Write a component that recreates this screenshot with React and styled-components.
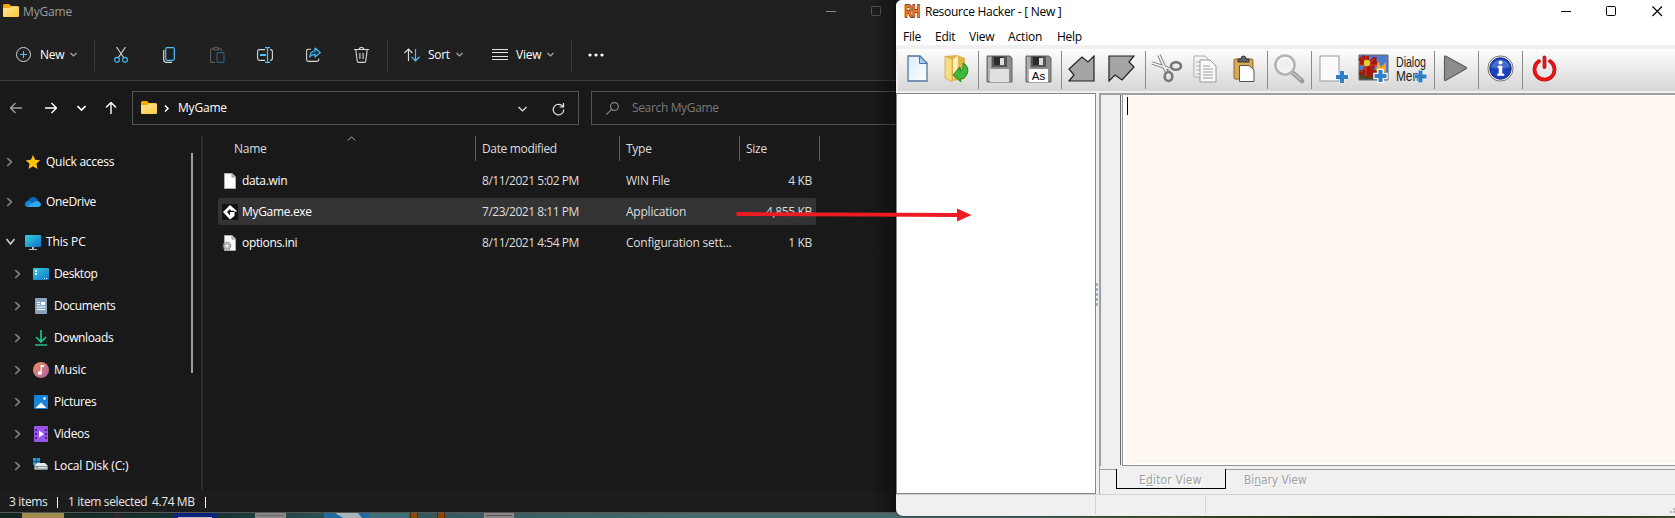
import React from "react";
import styled, { createGlobalStyle, css } from "styled-components";

const Global = createGlobalStyle`
  * { box-sizing: border-box; }
  html, body { margin: 0; padding: 0; overflow: hidden; }
  body { font-family: "Open Sans", "Noto Sans", sans-serif; font-size: 12px; background: #14231f; }
  svg { display: block; flex: none; }
`;

const Desktop = styled.div`
  position: relative;
  width: 1675px;
  height: 518px;
  overflow: hidden;
  background: #14231f;
`;
const Wallpaper = styled.svg`
  position: absolute;
  left: 0;
  top: 508px;
`;
const DragArrow = styled.svg`
  position: absolute;
  left: 730px;
  top: 204px;
`;

const Text = styled.span`
  color: ${(p) => p.$color || "#fff"};
  font-size: ${(p) => p.$size || 12}px;
  font-weight: ${(p) => p.$weight || 400};
  letter-spacing: ${(p) => (p.$ls ?? -0.25)}px;
  margin-left: ${(p) => p.$ml || 0}px;
  line-height: 16px;
  white-space: pre;
  flex: none;
  ${(p) => p.$w && css`width: ${p.$w}px;`}
`;
const Slot = styled.span`
  display: flex;
  align-items: center;
  flex: none;
  width: ${(p) => p.$w}px;
  margin-left: ${(p) => p.$ml || 0}px;
  margin-top: ${(p) => p.$mt || 0}px;
`;

/* ---------- file explorer ---------- */
const Explorer = styled.section`
  position: absolute;
  left: 0;
  top: 0;
  width: 896px;
  height: 513px;
  display: flex;
  flex-direction: column;
  background: #191919;
  border-bottom: 1px solid #555;
  overflow: hidden;
`;
const EdgeShade = styled.div`
  position: absolute;
  right: 0;
  top: 0;
  width: 26px;
  height: 513px;
  background: linear-gradient(90deg, rgba(0, 0, 0, 0), rgba(0, 0, 0, 0.35));
`;
const DarkTitle = styled.header`
  height: 24px;
  display: flex;
  align-items: center;
  padding-left: 3px;
  background: #202020;
  flex: none;
`;
const CommandBar = styled.div`
  height: 57px;
  display: flex;
  align-items: center;
  padding: 5px 0 0 16px;
  background: #202020;
  border-bottom: 1px solid #3e3e3e;
  flex: none;
`;
const CommandRule = styled.i`
  width: 1px;
  height: 32px;
  background: #3a3a3a;
  flex: none;
  margin-left: ${(p) => p.$ml}px;
`;
const AddressRow = styled.div`
  height: 55px;
  display: flex;
  align-items: center;
  padding: 0 0 1px 10px;
  flex: none;
`;
const Field = styled.div`
  width: ${(p) => p.$w}px;
  height: 34px;
  margin-left: ${(p) => p.$ml}px;
  border: 1px solid #535353;
  display: flex;
  align-items: center;
  flex: none;
`;
const Panes = styled.div`
  height: 354px;
  display: flex;
  flex: none;
`;
const NavPane = styled.nav`
  width: 191px;
  padding-top: 6px;
  flex: none;
`;
const NavItem = styled.div`
  height: ${(p) => (p.$nested ? 32 : 40)}px;
  padding-left: ${(p) => (p.$nested ? 13 : 5)}px;
  display: flex;
  align-items: center;
`;
const NavChildren = styled.div`
  margin-top: -4px;
`;
const ScrollThumb = styled.div`
  width: 2px;
  height: 220px;
  margin-top: 17px;
  background: #9f9f9f;
  flex: none;
`;
const Splitter = styled.div`
  width: 2px;
  margin-left: 8px;
  background: #2b2b2b;
  flex: none;
`;
const FileList = styled.div`
  padding-left: 15px;
  flex: 1;
`;
const Columns = styled.div`
  display: flex;
  height: 25px;
  margin-bottom: 6px;
`;
const Column = styled.div`
  width: ${(p) => p.$w}px;
  padding-left: ${(p) => p.$pad}px;
  border-right: 1px solid #5c5c5c;
  display: flex;
  align-items: center;
  flex: none;
`;
const SortCaret = styled.svg`
  align-self: flex-start;
  margin-left: 80px;
`;
const FileRow = styled.div`
  width: 598px;
  height: 27px;
  margin-bottom: 4px;
  padding: 0 4px 0 4px;
  display: flex;
  align-items: center;
  border-radius: 2px;
  background: ${(p) => (p.$selected ? "#333333" : "transparent")};
`;
const Cell = styled.div`
  width: ${(p) => p.$w}px;
  color: #dedede;
  letter-spacing: ${(p) => (p.$ls ?? -0.25)}px;
  white-space: pre;
  text-align: ${(p) => (p.$right ? "right" : "left")};
  flex: none;
`;
const DarkStatus = styled.footer`
  height: 22px;
  display: flex;
  align-items: center;
  padding: 2px 0 0 9px;
  background: #1c1c1c;
`;
const StatusRule = styled.i`
  width: 1px;
  height: 11px;
  margin-left: ${(p) => p.$ml}px;
  background: #fff;
`;

/* ---------- resource hacker ---------- */
const Hacker = styled.section`
  position: absolute;
  left: 896px;
  top: 0;
  width: 779px;
  height: 516px;
  display: flex;
  flex-direction: column;
  background: #f0f0f0;
  border-radius: 6px 0 0 7px;
  overflow: hidden;
  box-shadow: 0 0 2px #000;
`;
const LightTitle = styled.header`
  height: 24px;
  display: flex;
  align-items: center;
  padding-left: 8px;
  background: #fff;
  flex: none;
`;
const MenuBar = styled.div`
  height: 21px;
  padding: 4px 0 0 7px;
  display: flex;
  align-items: center;
  background: #fff;
  flex: none;
`;
const ToolStrip = styled.div`
  height: 42px;
  margin: 4px 0 2px 2px;
  padding-left: 7px;
  display: flex;
  align-items: center;
  background: linear-gradient(#fdfdfd, #d6d6d6);
  flex: none;
`;
const ToolRule = styled.i`
  width: 1px;
  height: 38px;
  margin-left: ${(p) => p.$ml}px;
  background: #8a8a8a;
  flex: none;
`;
const Workspace = styled.div`
  height: 401px;
  display: flex;
  flex: none;
`;
const Tree = styled.div`
  width: 200px;
  border: 1px solid #828790;
  background: #fff;
  flex: none;
`;
const Grip = styled.div`
  width: 3px;
  display: flex;
  flex-direction: column;
  justify-content: center;
  gap: 2px;
  padding-top: 2px;
  flex: none;
`;
const GripDot = styled.i`
  height: 3px;
  width: 2px;
  background: #99b4d1;
`;
const RightPane = styled.div`
  width: 680px;
  display: flex;
  flex-direction: column;
  border-left: 1px solid #9f9f9f;
  flex: none;
`;
const EditorFrame = styled.div`
  height: 373px;
  display: flex;
  border-top: 2px solid #9f9f9f;
  border-left: 1px solid #9f9f9f;
  flex: none;
`;
const Gutter = styled.div`
  width: 20px;
  height: 370px;
  border-right: 1px solid #696969;
`;
const Editor = styled.div`
  flex: 1;
  height: 371px;
  margin-left: 1px;
  border: solid #8f9496;
  border-width: 0 0 1px 1px;
  background: #fff8f2;
  box-shadow: inset 2px -2px #fff, inset 0 1px #fff;
  padding: 2px 0 0 4px;
`;
const Caret = styled.i`
  display: block;
  width: 1px;
  height: 18px;
  background: #000;
`;
const Tabs = styled.div`
  display: flex;
  height: 24px;
  margin-top: 3px;
`;
const TabEdge = styled.div`
  width: ${(p) => p.$w || 15}px;
  border-top: 1px solid #9f9f9f;
`;
const Tab = styled.div`
  height: 20px;
  width: ${(p) => (p.$active ? 110 : 448)}px;
  padding: 3px 0 0 ${(p) => (p.$active ? 22 : 18)}px;
  border: solid #000;
  border-width: ${(p) => (p.$active ? "0 1px 1px 1px" : "0")};
  ${(p) => !p.$active && css`flex: 1; border-top: 1px solid #9f9f9f; padding-top: 2px;`}
  font: 12px/17px "DejaVu Sans Condensed", "DejaVu Sans", sans-serif;
  font-stretch: condensed;
  letter-spacing: ${(p) => (p.$active ? 0.15 : -0.1)}px;
  color: #a0a0a0;
  text-shadow: 1px 1px #fff;
  white-space: pre;
`;
const LightStatus = styled.footer`
  flex: 1;
  border-top: 1px solid #d2d2d2;
  display: flex;
  padding: 1px 0 2px;
`;
const StatusCell = styled.div`
  width: ${(p) => p.$w}px;
  border-right: 1px solid #d2d2d2;
`;
const SizeGrip = styled.svg`
  margin: 12px 0 0 auto;
`;
const DialogGlyph = styled.svg`
  overflow: visible;
`;

/* ---------- icons ---------- */
const Chevron = ({ w = 7, h = 4, color = "#a8a8a8", sw = 1.2 }) => (
  <svg width={w} height={h + 2} viewBox={`0 0 ${w} ${h + 2}`} fill="none" stroke={color} strokeWidth={sw}>
    <path d={`M.5 1L${w / 2} ${h}L${w - 0.5} 1`} />
  </svg>
);
const SideChevron = ({ color = "#808080" }) => (
  <svg width="7" height="10" fill="none" stroke={color} strokeWidth="1.7"><path d="M1.2 1L5.4 5L1.2 9" /></svg>
);
const Folder = () => (
  <svg width="16" height="13">
    <defs><linearGradient id="fold" x2="1" y2="1"><stop stopColor="#ffe69a" /><stop offset="1" stopColor="#ffc83a" /></linearGradient></defs>
    <path d="M0 1.5Q0 0 1.5 0H6L8 2H14.5Q16 2 16 3.5V7H0Z" fill="#f2a900" />
    <path d="M0 5Q0 4 1 4H6L8 2.5H15Q16 2.5 16 3.5V12Q16 13 15 13H1Q0 13 0 12Z" fill="url(#fold)" />
  </svg>
);
const NavArrow = ({ dir, color = "#fff" }) => (
  <svg width="12" height="12" fill="none" stroke={color} strokeWidth="1.4">
    <g transform={`rotate(${dir} 6 6)`}><path d="M0 6H11.5M6.5 1L11.5 6L6.5 11" /></g>
  </svg>
);
const PlusCircle = () => (
  <svg width="15" height="15" fill="none" stroke="#d8d8d8"><circle cx="7.5" cy="7.5" r="7" /><path d="M7.5 4V11M4 7.5H11" stroke="#4cc2ff" strokeWidth="1.1" /></svg>
);
const Scissors = () => (
  <svg width="14" height="16" fill="none" stroke="#d8d8d8" strokeWidth="1.1">
    <path d="M2.5 0L9.6 10.5M11.5 0L4.4 10.5" /><g stroke="#4cc2ff"><circle cx="3" cy="12.8" r="2.4" /><circle cx="11" cy="12.8" r="2.4" /></g>
  </svg>
);
const Copy = () => (
  <svg width="12" height="16" fill="none" stroke="#d8d8d8" strokeWidth="1.2"><path d="M.7 3V12.5Q.7 15.3 3.5 15.3H9" /><rect x="2.7" y=".7" width="8.6" height="12.6" rx="1.5" stroke="#4cc2ff" /></svg>
);
const Paste = () => (
  <svg width="15" height="16" fill="none" stroke="#5e5e5e" strokeWidth="1.1"><path d="M5 15.4H1.8Q.6 15.4 .6 14V3Q.6 1.8 1.8 1.8H3.5M9 1.8H10.5Q11.6 1.8 11.6 4M3.6 .8H8.6V2.8H3.6Z" /><rect x="7" y="5.6" width="7" height="9.8" rx="1" stroke="#2e5f7b" /></svg>
);
const Rename = () => (
  <svg width="16" height="16" fill="none" stroke="#d8d8d8" strokeWidth="1.1"><path d="M8 2.6H2.5Q.6 2.6 .6 4.5V11.5Q.6 13.4 2.5 13.4H8M13 2.6Q15.4 2.6 15.4 4.5V11.5Q15.4 13.4 13 13.4" /><path d="M8 .6H13M8 15.4H13M10.5 .6V15.4" stroke="#4cc2ff" strokeWidth="1.2" /><path d="M3 8H9" stroke="#4cc2ff" strokeWidth="2" /></svg>
);
const Share = () => (
  <svg width="15" height="15" fill="none" stroke="#d8d8d8" strokeWidth="1.1"><path d="M5 2.2H2.3Q.6 2.2 .6 4V12.6Q.6 14.4 2.3 14.4H11Q12.8 14.4 12.8 12.6V11.5" /><path d="M9 1L14.4 5.6L9 10.2V7.6Q5.5 7.4 3.6 10Q4 4.4 9 3.8Z" stroke="#4cc2ff" fill="#16425a" strokeLinejoin="round" /></svg>
);
const Trash = () => (
  <svg width="15" height="16" fill="none" stroke="#d8d8d8" strokeWidth="1.1"><path d="M0 2.5H15M5 2.5Q5.2 .5 7.5 .5T10 2.5M1.8 2.5L3.2 14Q3.4 15.4 4.6 15.4H10.4Q11.6 15.4 11.8 14L13.2 2.5M5.9 6V12M9.1 6V12" /></svg>
);
const SortIcon = () => (
  <svg width="16" height="14" fill="none" stroke="#d8d8d8" strokeWidth="1.2"><path d="M4.5 13V1M.4 5L4.5 1L8.4 5" /><path d="M11.5 1V12.8M7.6 8.8L11.5 12.8L15.6 8.8" stroke="#4cc2ff" /></svg>
);
const ViewIcon = () => (
  <svg width="16" height="11" stroke="#e4e4e4"><path d="M0 .5H16M0 3.5H16M0 7.5H16M0 10.5H16" /></svg>
);
const Dots = () => <svg width="16" height="4" fill="#fff"><circle cx="2" cy="2" r="1.6" /><circle cx="8" cy="2" r="1.6" /><circle cx="14" cy="2" r="1.6" /></svg>;
const Refresh = () => (
  <svg width="13" height="13" fill="none" stroke="#e4e4e4" strokeWidth="1.2"><path d="M11.8 6.5A5.3 5.3 0 1 1 9.6 2.3L11.4 3.8M11.5 0V4H7.6" /></svg>
);
const Lens = () => <svg width="13" height="13" fill="none" stroke="#8a8a8a" strokeWidth="1.1"><circle cx="8.4" cy="4.5" r="3.9" /><path d="M5.6 7.3L.4 12.6" /></svg>;

const navIcons = {
  star: <svg width="16" height="16"><path d="M8 1L10.1 5.8L15.2 6.3L11.4 9.8L12.5 15L8 12.2L3.5 15L4.6 9.8L.8 6.3L5.9 5.8Z" fill="#ffc40d" /></svg>,
  cloud: <svg width="16" height="16"><path d="M3 8Q4 3 8 3Q12 3 13 7L8 11Z" fill="#0a64b8" /><path d="M0 10.5Q0 7 4 6.6L12 13H3.5Q0 13 0 10.5Z" fill="#1487dc" /><path d="M2 12.5L9 8Q12 6 14.4 8Q16 9 16 10.5Q15.6 13 13 13H3.5Z" fill="#2fa9f2" /></svg>,
  pc: <svg width="16" height="16"><defs><linearGradient id="scr" x2="1" y2="1"><stop stopColor="#35d2df" /><stop offset="1" stopColor="#1170c8" /></linearGradient></defs><rect y="1" width="16" height="12" rx="1" fill="url(#scr)" /><path d="M7 13H9V15H12V16H4V15H7Z" fill="#b8c0c6" /></svg>,
  desktop: <svg width="16" height="16"><rect y="2" width="16" height="12" rx="1" fill="url(#scr)" /><path d="M2 4H4V6H2ZM2 7H4V9H2ZM11 12H12V13H11ZM13 12H14V13H13Z" fill="#fff" /></svg>,
  doc: <svg width="16" height="16"><rect x="2" width="12" height="16" rx="1" fill="#8ba5c0" /><path d="M4 4H7V5H4ZM4 6H7V7H4ZM8 4H12V7H8ZM4 8.5H12V9.5H4ZM4 11H12V12H4Z" fill="#fff" /></svg>,
  down: <svg width="16" height="16" fill="none" stroke="#21bf91" strokeWidth="1.7"><path d="M8 0V11.5M3 7L8 12L13 7M2 15H14" /></svg>,
  music: <svg width="16" height="16"><defs><linearGradient id="mus" x2="1" y2="1"><stop stopColor="#f29352" /><stop offset="1" stopColor="#a85cae" /></linearGradient></defs><circle cx="8" cy="8" r="8" fill="url(#mus)" /><path d="M7.6 3H11V5H8.8V11.2A2 1.7 0 1 1 7.6 9.6Z" fill="#fff" /></svg>,
  pic: <svg width="16" height="16"><rect x="1" y="1" width="14" height="14" rx="1" fill="#1683d8" /><path d="M2.5 14L8 8.5L13.5 14Z" fill="#fff" /><circle cx="11.5" cy="4.5" r="1.3" fill="#fff" /></svg>,
  video: <svg width="16" height="16"><rect x="1" width="14" height="16" rx="1" fill="#9a55ea" /><path d="M2 3H4V5H2ZM2 7H4V9H2ZM2 11H4V13H2ZM12 3H14V5H12ZM12 7H14V9H12ZM12 11H14V13H12Z" fill="#4b238c" /><path d="M6 4.5L11 8L6 11.5Z" fill="#fff" /></svg>,
  disk: <svg width="16" height="16"><path d="M0 0H3.3V3.3H0ZM3.8 0H7V3.3H3.8ZM0 3.8H3.3V7H0ZM3.8 3.8H7V7H3.8Z" fill="#1c9ce8" /><path d="M4 5H12L15 8H1Z" fill="#e8e8e8" /><rect x="1" y="8" width="14" height="4" rx="1" fill="#828a8c" /><path d="M2 9H14V10.5H2Z" fill="#dfe6e2" /><path d="M3 9H5V10H3Z" fill="#27c26a" /></svg>,
};
const fileIcons = {
  page: <svg width="16" height="16"><path d="M2.5 .5H10L13.5 4V15.5H2.5Z" fill="#fbfbfb" stroke="#aaa" /><path d="M10 .5V4H13.5" fill="#ccc" stroke="#999" /></svg>,
  game: <svg width="16" height="16"><path d="M0 0H16V16H0Z" fill="#111" /><path d="M8 1L15.4 7.5H12.5V12L8 15.5L1 8Z" fill="#fff" /><path d="M8 5L5 8L8 11.5V8H12V6.8H8.8Z" fill="#111" /></svg>,
  ini: <svg width="16" height="16"><path d="M2.5 .5H10L13.5 4V15.5H2.5Z" fill="#f8f8f8" stroke="#aaa" /><path d="M10 .5V4H13.5" fill="#ccc" stroke="#999" /><circle cx="5" cy="11" r="3.6" fill="#b8bec2" stroke="#858b90" strokeDasharray="1.5 1" strokeWidth="1.6" /><circle cx="5" cy="11" r="1.3" fill="#f4f4f4" /></svg>,
};

const BluePlus = ({ x, y, edge = 0.7 }) => <path transform={`translate(${x} ${y})`} d="M4 0H8V4H12V8H8V12H4V8H0V4H4Z" fill="#2f7fc8" stroke="#fff" strokeWidth={edge} paintOrder="stroke" />;
const Floppy = ({ as }) => (
  <svg width="27" height="28">
    <path d="M1 1H24L26 3V27H1Z" fill="#8c8c8c" stroke="#666" />
    <path d="M2 2H5V26H2Z" fill="#b0b0b0" />
    <rect x="6" y="1" width="15" height="11" fill="#555" /><rect x="8" y="2" width="9" height="8" fill="#2b2b2b" /><rect x="14" y="3" width="4" height="7" fill="#ddd" />
    <rect x="4" y="14" width="19" height="13" fill={as ? "#fff" : "#e0e0e0"} />
    {as && <text x="13.5" y="25" textAnchor="middle" fontFamily="Liberation Sans" fontSize="11.5">As</text>}
  </svg>
);
const tools = {
  blank: <svg width="21" height="27"><defs><linearGradient id="pg" x2="1" y2="1"><stop stopColor="#d9ecfb" /><stop offset="1" stopColor="#fff" /></linearGradient></defs><path d="M1 1H13L20 8V26H1Z" fill="url(#pg)" stroke="#52749f" strokeWidth="1.3" /><path d="M12.5 1V8.5H20Z" fill="#a8ccec" stroke="#4a78ac" /></svg>,
  open: <svg width="25" height="29"><path d="M1 2L13 1L21 4V25L8 27L1 24Z" fill="#e0b54e" /><path d="M1 2L8 5V28L1 24Z" fill="#f7dc86" stroke="#cfa23e" strokeWidth=".7" /><path d="M9 5L14 2V12L9 26Z" fill="#fff1b8" /><path d="M19 9Q26 13 23 20Q21 25 16 25L17 28L9 21L16 13L16.5 17Q20 16 19 9Z" fill="#3fb83c" stroke="#18871f" /></svg>,
  save: <Floppy />,
  saveAs: <Floppy as />,
  arrowIn: <svg width="27" height="27"><path d="M1 26L6 20L1 14L14 2L20 7L26 1V26Z" fill="#a5a5a5" stroke="#222" strokeWidth="1.2" /></svg>,
  arrowOut: <svg width="27" height="27"><path d="M1 1H26L21 7L26 12L14 25L7 20L1 26Z" fill="#a5a5a5" stroke="#222" strokeWidth="1.2" /></svg>,
  cut: <svg width="32" height="29" fill="none" stroke="#777"><path d="M8 1L16 19M1 9L19 15" stroke="#777" strokeWidth="3.4" /><path d="M8 1L16 19M1 9L19 15" stroke="#f4f4f4" strokeWidth="1.8" /><ellipse cx="25" cy="12" rx="5" ry="3.8" strokeWidth="2.6" /><ellipse cx="17.5" cy="22.5" rx="3.8" ry="4.5" strokeWidth="2.6" /></svg>,
  copy: <svg width="25" height="28"><path d="M1 1H12L17 6V22H1Z" fill="#f5f5f5" stroke="#aaa" /><path d="M3 7H10M3 11H8M3 15H8M3 19H8" stroke="#aaa" /><path d="M7 5H17L23 11V27H7Z" fill="#fafafa" stroke="#999" /><path d="M10 11H17M10 14H20M10 17H20M10 20H20M10 23H20" stroke="#999" /></svg>,
  paste: <svg width="22" height="28"><rect x="1" y="4" width="19" height="20" rx="1" fill="#dda852" stroke="#8b6a35" /><path d="M5 4H8Q8 1 10.5 1T13 4H16V7H5Z" fill="#666" stroke="#333" /><path d="M6.5 10.5H16L21 15V26.5H6.5Z" fill="#fff" stroke="#555" /></svg>,
  find: <svg width="31" height="30"><path d="M18 18L28 27" stroke="#999" strokeWidth="4.5" strokeLinecap="round" /><path d="M18 18L27 26" stroke="#ccc" strokeWidth="1.4" /><circle cx="11" cy="11" r="9.5" fill="#f0f0f0" stroke="#b4b4b4" strokeWidth="2.6" /><circle cx="11" cy="11" r="7.4" fill="none" stroke="#fff" /></svg>,
  addDoc: <svg width="30" height="30"><rect x="1" y="2" width="19" height="25" fill="#fafafa" stroke="#999" /><BluePlus x="17" y="17" /></svg>,
  addPic: (
    <svg width="31" height="29"><path d="M1 1H30V26H1Z" fill="#4f7bd0" stroke="#666" /><path d="M1.5 16H25V25.5H1.5Z" fill="#4a4b20" />
      <g stroke="#a5170d" strokeWidth="4"><path d="M1.5 4L15 15M9 2V23M2 21L16 5M2 9H19M18 22L4 2M17 3L12 23" /></g><g stroke="#d9421f"><path d="M3 3L16 16M8 2V22M3 18L16 5M2 11H19" /></g>
      <circle cx="9" cy="9" r="3.2" fill="#ddcf2f" /><path d="M18 16L20 7L23 13L28 8V17L21 22Z" fill="#f2a51e" /><BluePlus x="16.5" y="16" edge={2.4} />
    </svg>
  ),
  dialog: (
    <DialogGlyph width="32" height="32" fontFamily="Liberation Sans" fontSize="15.5" fill="#1c1c1c"><text x="0" y="14" textLength="30" lengthAdjust="spacingAndGlyphs">Dialog</text><text x="0" y="28" textLength="23" lengthAdjust="spacingAndGlyphs">Men</text><BluePlus x="18.5" y="17.5" /></DialogGlyph>
  ),
  play: <svg width="25" height="27"><path d="M1.5 2Q1.5 .5 3 1.2L23 12.2Q24 13 23 13.8L3 25.3Q1.5 26 1.5 24.5Z" fill="#8c8c8c" stroke="#5e5e5e" strokeWidth="1.2" /></svg>,
  info: <svg width="27" height="27"><circle cx="13.5" cy="13.5" r="12.6" fill="#ececec" stroke="#777" /><circle cx="13.5" cy="13.5" r="10.7" fill="#1c43be" stroke="#14287c" /><path d="M4 12A10 10 0 0 1 23 12Q13 15 4 12Z" fill="#6f8ede" opacity=".55" /><circle cx="13.5" cy="7.4" r="2" fill="#fff" /><path d="M11 11H15V19H17V20.5H10.5V19H12V12.5H11Z" fill="#fff" stroke="#fff" strokeWidth=".6" /></svg>,
  power: <svg width="25" height="27" fill="none" strokeLinecap="round"><path d="M7 6.2A10 10 0 1 0 18 6.2M12.5 2.4V12" stroke="#a81a1a" strokeWidth="3.8" /><path d="M7 6.2A10 10 0 1 0 18 6.2M12.5 2.4V12" stroke="#ee1111" strokeWidth="2.8" /></svg>,
};

/* [label, icon, letter spacing] */
const navRoots = [["Quick access", "star", -0.25], ["OneDrive", "cloud", -0.35], ["This PC", "pc", -0.15]];
const navChildren = [
  ["Desktop", "desktop", -0.4], ["Documents", "doc", -0.3], ["Downloads", "down", -0.37], ["Music", "music", -0.1],
  ["Pictures", "pic", -0.32], ["Videos", "video", -0.3], ["Local Disk (C:)", "disk", -0.15],
];
const files = [
  ["page", "data.win", "8/11/2021 5:02 PM", "WIN File", "4 KB"],
  ["game", "MyGame.exe", "7/23/2021 8:11 PM", "Application", "4,855 KB"],
  ["ini", "options.ini", "8/11/2021 4:54 PM", "Configuration sett...", "1 KB"],
];
/* [tool or "|", distance from the previous item, width] */
const strip = [
  ["blank", 2, 21], ["open", 16, 25], ["|", 9], ["save", 7, 27], ["saveAs", 12, 27], ["|", 9], ["arrowIn", 6, 27], ["arrowOut", 13, 27],
  ["|", 10], ["cut", 5, 32], ["copy", 10, 25], ["paste", 15, 22], ["|", 12], ["find", 6, 31], ["|", 6], ["addDoc", 7, 30], ["addPic", 9, 31],
  ["dialog", 7, 32], ["|", 6], ["play", 8, 25], ["|", 10], ["info", 8, 27], ["|", 8], ["power", 9, 25],
];

const WindowGlyph = ({ kind, color, r = 0 }) => (
  <svg width="11" height="11" fill="none" stroke={color}>
    {kind === "min" && <path d="M0 5.5H10" />}
    {kind === "max" && <rect x=".5" y=".5" width="9" height="9" rx={r} />}
    {kind === "close" && <path d="M.5 .5L10 10M10 .5L.5 10" strokeWidth="1.2" />}
  </svg>
);

const NavEntry = ({ label, icon, ls, nested }) => (
  <NavItem $nested={nested}>
    <Slot $w={12} $ml={nested ? 1 : 1}>
      {icon === "pc" ? <Chevron w={9} h={6} color="#c8c8c8" sw={1.7} /> : <SideChevron />}
    </Slot>
    <Slot $w={16} $ml={7}>{navIcons[icon]}</Slot>
    <Text $ml={5} $ls={ls}>{label}</Text>
  </NavItem>
);

function FileExplorer() {
  return (
    <Explorer>
      <DarkTitle>
        <Slot $w={16} $mt={-3}><Folder /></Slot>
        <Text $color="#9c9c9c" $ml={4} $w={803} $ls={-0.15}>MyGame</Text>
        <Slot $w={11} $mt={-1}><WindowGlyph kind="min" color="#858585" /></Slot>
        <Slot $w={11} $ml={34} $mt={-1}><WindowGlyph kind="max" color="#555" r={1} /></Slot>
      </DarkTitle>
      <CommandBar>
        <Slot $w={15} $mt={-1}><PlusCircle /></Slot>
        <Text $ml={9} $w={30} $weight={500} $ls={-0.2}>New</Text>
        <Chevron />
        <CommandRule $ml={17} />
        <Slot $w={14} $ml={19}><Scissors /></Slot>
        <Slot $w={12} $ml={35}><Copy /></Slot>
        <Slot $w={15} $ml={35}><Paste /></Slot>
        <Slot $w={16} $ml={32}><Rename /></Slot>
        <Slot $w={15} $ml={33}><Share /></Slot>
        <Slot $w={15} $ml={33}><Trash /></Slot>
        <CommandRule $ml={18} />
        <Slot $w={16} $ml={16}><SortIcon /></Slot>
        <Text $ml={8} $w={28} $weight={500} $ls={-0.3}>Sort</Text>
        <Chevron />
        <Slot $w={16} $ml={29}><ViewIcon /></Slot>
        <Text $ml={8} $w={31} $weight={500} $ls={-0.2}>View</Text>
        <Chevron />
        <CommandRule $ml={17} />
        <Slot $w={16} $ml={16}><Dots /></Slot>
      </CommandBar>
      <AddressRow>
        <Slot $w={12}><NavArrow dir={180} color="#a0a0a0" /></Slot>
        <Slot $w={12} $ml={23}><NavArrow dir={0} /></Slot>
        <Slot $w={9} $ml={20}><Chevron w={9} h={5} color="#fff" sw={1.6} /></Slot>
        <Slot $w={12} $ml={19}><NavArrow dir={-90} /></Slot>
        <Field $w={447} $ml={15}>
          <Slot $w={16} $ml={8} $mt={-2}><Folder /></Slot>
          <Slot $w={6} $ml={7}><svg width="6" height="7" fill="none" stroke="#fff" strokeWidth="1.5"><path d="M1 .5L4 3.5L1 6.5" /></svg></Slot>
          <Text $ml={8} $w={340} $ls={-0.2}>MyGame</Text>
          <Slot $w={9} $mt={2}><Chevron w={9} h={5} color="#e4e4e4" /></Slot>
          <Slot $w={13} $ml={25} $mt={2}><Refresh /></Slot>
        </Field>
        <Field $w={320} $ml={12}>
          <Slot $w={13} $ml={14}><Lens /></Slot>
          <Text $ml={13} $color="#7a7a7a" $ls={-0.35}>Search MyGame</Text>
        </Field>
      </AddressRow>
      <Panes>
        <NavPane>
          {navRoots.map(([label, icon, ls]) => <NavEntry key={label} label={label} icon={icon} ls={ls} />)}
          <NavChildren>
            {navChildren.map(([label, icon, ls]) => <NavEntry key={label} label={label} icon={icon} ls={ls} nested />)}
          </NavChildren>
        </NavPane>
        <ScrollThumb />
        <Splitter />
        <FileList>
          <Columns>
            <Column $w={258} $pad={16}>
              <Text $color="#dedede">Name</Text>
              <SortCaret width="9" height="5" fill="none" stroke="#aaa"><path d="M.8 4.5L4.5 .8L8.2 4.5" /></SortCaret>
            </Column>
            <Column $w={144} $pad={6}><Text $color="#dedede" $ls={-0.35}>Date modified</Text></Column>
            <Column $w={120} $pad={6}><Text $color="#dedede">Type</Text></Column>
            <Column $w={80} $pad={6}><Text $color="#dedede">Size</Text></Column>
          </Columns>
          {files.map(([icon, name, date, type, size]) => (
            <FileRow key={name} $selected={icon === "game"}>
              <Slot $w={20}>{fileIcons[icon]}</Slot>
              <Text $w={240} $ls={-0.33}>{name}</Text>
              <Cell $w={144} $ls={-0.47}>{date}</Cell>
              <Cell $w={116} $ls={-0.22}>{type}</Cell>
              <Cell $w={70} $right $ls={-0.35}>{size}</Cell>
            </FileRow>
          ))}
        </FileList>
      </Panes>
      <DarkStatus>
        <Text $color="#e8e8e8" $w={38} $ls={-0.35}>3 items</Text>
        <StatusRule $ml={10} />
        <Text $color="#e8e8e8" $ml={10} $w={84} $ls={-0.35}>1 item selected</Text>
        <Text $color="#e8e8e8" $w={43} $ls={-0.4}>4.74 MB</Text>
        <StatusRule $ml={10} />
      </DarkStatus>
      <EdgeShade />
    </Explorer>
  );
}

function ResourceHacker() {
  return (
    <Hacker>
      <LightTitle>
        <Slot $w={17} $mt={-1}>
          <svg width="17" height="15">
            <text
              x="0.5" y="13" textLength="15.5" lengthAdjust="spacingAndGlyphs" fontFamily="Liberation Sans" fontWeight="700" fontSize="16"
              fill="#f07a2c" stroke="#4a2412" strokeWidth="1.5" paintOrder="stroke"
            >RH</text>
          </svg>
        </Slot>
        <Text $color="#000" $ml={4} $w={636} $ls={-0.28}>Resource Hacker - [ New ]</Text>
        <Slot $w={11} $mt={-1}><WindowGlyph kind="min" color="#000" /></Slot>
        <Slot $w={11} $ml={34} $mt={-1}><WindowGlyph kind="max" color="#000" r={1} /></Slot>
        <Slot $w={11} $ml={35} $mt={-1}><WindowGlyph kind="close" color="#000" /></Slot>
      </LightTitle>
      <MenuBar>
        <Text $color="#000" $w={32}>File</Text>
        <Text $color="#000" $w={34}>Edit</Text>
        <Text $color="#000" $w={39}>View</Text>
        <Text $color="#000" $w={49} $ls={-0.15}>Action</Text>
        <Text $color="#000">Help</Text>
      </MenuBar>
      <ToolStrip>
        {strip.map(([name, gap, w], i) =>
          name === "|" ? <ToolRule key={i} $ml={gap} /> : <Slot key={i} $w={w} $ml={gap} $mt={-3}>{tools[name]}</Slot>
        )}
      </ToolStrip>
      <Workspace>
        <Tree />
        <Grip>{[0, 1, 2, 3, 4].map((n) => <GripDot key={n} />)}</Grip>
        <RightPane>
          <EditorFrame>
            <Gutter />
            <Editor><Caret /></Editor>
          </EditorFrame>
          <Tabs>
            <TabEdge $w={16} />
            <Tab $active>E<u>d</u>itor View</Tab>
            <Tab>Bi<u>n</u>ary View</Tab>
          </Tabs>
        </RightPane>
      </Workspace>
      <LightStatus>
        <StatusCell $w={200} />
        <StatusCell $w={110} />
        <SizeGrip width="5" height="6" fill="#b8b8b8"><path d="M0 3H2V5H0ZM3 3H5V5H3ZM3 0H5V2H3Z" /></SizeGrip>
      </LightStatus>
    </Hacker>
  );
}

export default function App() {
  return (
    <Desktop>
      <Global />
      <Wallpaper width="1675" height="10">
        <defs>
          <linearGradient id="wall"><stop stopColor="#14231f" /><stop offset=".13" stopColor="#173332" /><stop offset=".2" stopColor="#2f5256" /><stop offset=".42" stopColor="#47696c" /><stop offset=".6" stopColor="#47696a" /><stop offset=".7" stopColor="#46572b" /><stop offset=".85" stopColor="#1c2a18" /><stop offset="1" stopColor="#45552d" /></linearGradient>
        </defs>
        <rect width="1675" height="10" fill="url(#wall)" />
        <rect x="22" width="42" height="10" fill="#a18b4a" />
        <rect x="114" width="7" height="10" fill="#2d2528" />
        <rect x="173" width="44" height="10" fill="#0d237c" /><rect x="178" y="9" width="34" height="1" fill="#bbb" />
        <rect x="255" width="31" height="10" fill="#8b8688" /><rect x="257" y="7" width="27" height="1" fill="#666" />
        <rect x="324" width="46" height="10" fill="#1d6c9c" /><path d="M335 5H358L362 10H343Z" fill="#a8b4bb" />
        <rect x="370" width="39" height="10" fill="#3d7176" />
        <g fill="#8f4700" stroke="#592310"><rect x="410.5" width="7" height="11" /><rect x="437.5" width="7" height="11" /></g>
        <rect x="484" width="30" height="10" fill="#8b8688" /><rect x="486" y="7" width="26" height="1" fill="#555" />
      </Wallpaper>
      <FileExplorer />
      <ResourceHacker />
      <DragArrow width="250" height="22">
        <path d="M8 10L228 11" stroke="#ed1c24" strokeWidth="3.8" strokeLinecap="round" />
        <path d="M227 4.5L241.5 11L227 17.5Z" fill="#ed1c24" />
      </DragArrow>
    </Desktop>
  );
}
